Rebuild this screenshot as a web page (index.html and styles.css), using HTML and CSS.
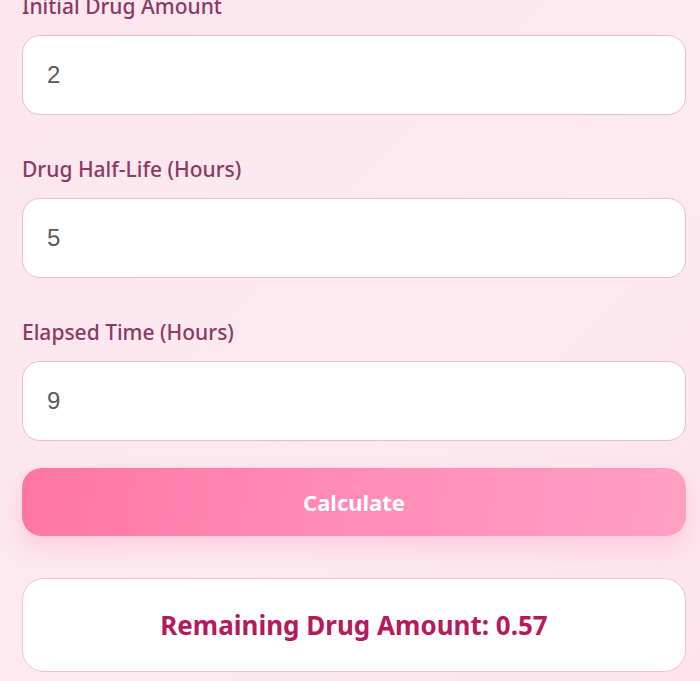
FILE: index.html
```html
<!DOCTYPE html>
<html lang="en">
  <head>
    <meta charset="utf-8" />
    <meta name="viewport" content="width=device-width, initial-scale=1.0" />
    <title>Drug Half-Life Calculator</title>
    <link rel="stylesheet" href="styles.css">
  </head>
  <body>
    <div class="calculator">
      <div class="field">
        <label for="amount">Initial Drug Amount</label>
        <input type="number" id="amount" class="input" value="2" />
      </div>
      <div class="field">
        <label for="halflife">Drug Half-Life (Hours)</label>
        <input type="number" id="halflife" class="input" value="5" />
      </div>
      <div class="field field-last">
        <label for="elapsed">Elapsed Time (Hours)</label>
        <input type="number" id="elapsed" class="input" value="9" />
      </div>
      <button class="calc-btn" onclick="calculate()">Calculate</button>
      <div class="result" id="result">Remaining Drug Amount: 0.57</div>
    </div>

    <script>
      function calculate() {
        const amount = parseFloat(document.getElementById("amount").value);
        const halfLife = parseFloat(document.getElementById("halflife").value);
        const elapsed = parseFloat(document.getElementById("elapsed").value);
        // remaining = initial * (1/2)^(t / half-life)
        const remaining = amount * Math.pow(0.5, elapsed / halfLife);
        document.getElementById("result").textContent =
          "Remaining Drug Amount: " + remaining.toFixed(2);
      }
    </script>
  </body>
</html>
```

FILE: styles.css
```css
:root {
  font-family: "Noto Sans", "Open Sans", sans-serif;
}

html,
body {
  margin: 0;
  min-height: 100%;
}

body {
  background: linear-gradient(135deg, #fde6ee 0%, #fde9f0 60%, #fde2ec 100%);
  overflow: hidden;
}

.calculator {
  margin-top: -7px;
  padding: 0 14px 0 22px;
}

.field {
  margin-bottom: 41px;
}

.field-last {
  margin-bottom: 27px;
}

.field label {
  display: block;
  font-size: 21px;
  line-height: 26px;
  font-weight: 500;
  color: #8a3a64;
  margin-bottom: 16px;
}

.input {
  display: block;
  box-sizing: border-box;
  width: 100%;
  height: 80px;
  padding: 0 24px;
  border: 1px solid #e9bcd2;
  border-radius: 18px;
  background: #fff;
  font-family: "Liberation Sans", Arial, sans-serif;
  font-size: 24px;
  color: #5a5a5a;
  outline: none;
  appearance: textfield;
}

.input::-webkit-inner-spin-button,
.input::-webkit-outer-spin-button {
  appearance: none;
  margin: 0;
}

.calc-btn {
  display: block;
  width: 100%;
  height: 68px;
  border: 0;
  border-radius: 20px;
  background: linear-gradient(100deg, #ff75a4 0%, #ff8db6 50%, #ffa0c2 100%);
  color: #fff;
  font-family: inherit;
  font-size: 22px;
  font-weight: 700;
  box-shadow: 0 10px 22px rgba(255, 120, 165, 0.25);
  cursor: pointer;
}

.result {
  box-sizing: border-box;
  margin-top: 42px;
  height: 94px;
  display: flex;
  align-items: center;
  justify-content: center;
  background: #fff;
  border: 1px solid #f0c4d6;
  border-radius: 22px;
  font-size: 26px;
  font-weight: 700;
  color: #b51a5c;
}
```
